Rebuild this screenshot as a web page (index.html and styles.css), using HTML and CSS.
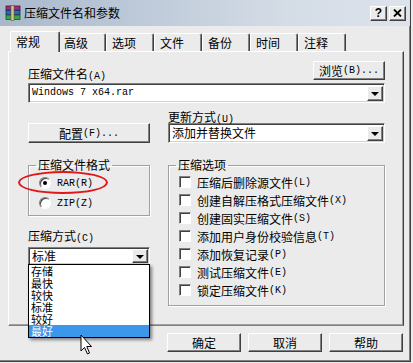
FILE: index.html
```html
<!DOCTYPE html>
<html lang="zh-CN">
<head>
  <meta charset="UTF-8" />
  <title>压缩文件名和参数</title>
  <link rel="stylesheet" href="styles.css">
</head>
<body>

  <div class="window">
    <!-- title bar -->
    <div class="titlebar">
      <svg class="app-icon" width="16" height="16" viewBox="0 0 16 16">
        <rect x="1" y="1" width="14" height="4" fill="#9b2f7a" stroke="#4a1238" stroke-width="0.8"/>
        <rect x="1" y="5.5" width="14" height="4" fill="#2f63c4" stroke="#142f66" stroke-width="0.8"/>
        <rect x="1" y="10" width="14" height="4.5" fill="#3aa24a" stroke="#185424" stroke-width="0.8"/>
        <rect x="6" y="0.5" width="3" height="15" fill="#d8c48a" stroke="#6b5a2a" stroke-width="0.6"/>
      </svg>
      <span class="title">压缩文件名和参数</span>
      <div class="caption-buttons">
        <div class="cap-btn help">?</div>
        <div class="cap-btn close">
          <svg width="9" height="8" viewBox="0 0 9 8">
            <path d="M1 0.5 L8 7.5 M8 0.5 L1 7.5" stroke="#000" stroke-width="1.8"/>
          </svg>
        </div>
      </div>
    </div>

    <!-- tabs -->
    <div class="tabs">
      <div class="tab active">常规</div>
      <div class="tab">高级</div>
      <div class="tab">选项</div>
      <div class="tab">文件</div>
      <div class="tab">备份</div>
      <div class="tab">时间</div>
      <div class="tab">注释</div>
    </div>

    <div class="panel">
      <div class="row-top">
        <div class="label">压缩文件名<span class="hk">(A)</span></div>
        <div class="btn browse">浏览<span class="hk">(B)...</span></div>
      </div>

      <div class="combo combo-archive">
        <span class="combo-text mono">Windows 7 x64.rar</span>
        <span class="combo-arrow"></span>
      </div>

      <div class="row-mid">
        <div class="col-left col-bottom">
          <div class="btn config">配置<span class="hk">(F)...</span></div>
        </div>
        <div class="col-right">
          <div class="label">更新方式<span class="hk">(U)</span></div>
          <div class="combo">
            <span class="combo-text">添加并替换文件</span>
            <span class="combo-arrow"></span>
          </div>
        </div>
      </div>

      <div class="row-groups">
        <div class="col-left">
          <fieldset class="group group-format">
            <legend>压缩文件格式</legend>
            <div class="radio-row"><span class="radio checked"></span><span class="mono">RAR(R)</span></div>
            <div class="radio-row"><span class="radio"></span><span class="mono">ZIP(Z)</span></div>
          </fieldset>
          <div class="label method-label">压缩方式<span class="hk">(C)</span></div>
          <div class="combo combo-method">
            <span class="combo-text">标准</span>
            <span class="combo-arrow"></span>
          </div>
        </div>

        <fieldset class="group group-options col-right">
          <legend>压缩选项</legend>
          <div class="check-row"><span class="check"></span>压缩后删除源文件<span class="hk">(L)</span></div>
          <div class="check-row"><span class="check"></span>创建自解压格式压缩文件<span class="hk">(X)</span></div>
          <div class="check-row"><span class="check"></span>创建固实压缩文件<span class="hk">(S)</span></div>
          <div class="check-row"><span class="check"></span>添加用户身份校验信息<span class="hk">(T)</span></div>
          <div class="check-row"><span class="check"></span>添加恢复记录<span class="hk">(P)</span></div>
          <div class="check-row"><span class="check"></span>测试压缩文件<span class="hk">(E)</span></div>
          <div class="check-row"><span class="check"></span>锁定压缩文件<span class="hk">(K)</span></div>
        </fieldset>
      </div>
    </div>

    <div class="footer">
      <div class="btn dlg-btn">确定</div>
      <div class="btn dlg-btn">取消</div>
      <div class="btn dlg-btn">帮助</div>
    </div>

    <!-- open dropdown of the method combo -->
    <ul class="dropdown-list">
      <li>存储</li>
      <li>最快</li>
      <li>较快</li>
      <li>标准</li>
      <li>较好</li>
      <li class="selected">最好</li>
    </ul>

    <div class="mark-ellipse"></div>

    <svg class="cursor" width="13" height="21" viewBox="0 0 13 21">
      <path d="M1 1 L1 17 L4.5 13.5 L7.5 20 L9.5 19 L6.8 12.5 L11.5 12.5 Z" fill="#fff" stroke="#000" stroke-width="1" stroke-linejoin="miter"/>
    </svg>
  </div>

</body>
</html>
```

FILE: styles.css
```css
/* === Global === */
html, body {
  margin: 0;
  padding: 0;
  background-color: #ebebeb;
}

body {
  font-family: "Noto Sans CJK SC", "Noto Sans", sans-serif;
  font-size: 12px;
  color: #000;
}

.hk,
.mono {
  font-family: "Liberation Mono", "Noto Sans CJK SC", monospace;
  font-size: 10px;
}

/* === Window === */
.window {
  position: relative;
  width: 411px;
  height: 362px;
  box-sizing: border-box;
  border-right: 1px solid #404040;
  border-bottom: 1px solid #404040;
  box-shadow: inset -1px -1px 0 #808080;
  overflow: hidden;
}

.titlebar {
  display: flex;
  align-items: center;
  height: 26px;
  padding: 0 4px 0 5px;
  background: linear-gradient(to right, #a8b8cc, #d4dce6 70%, #dde3eb);
}

.app-icon {
  margin-right: 3px;
}

.title {
  flex: 1;
  line-height: 14px;
}

.caption-buttons {
  display: flex;
  gap: 2px;
}

.cap-btn {
  display: flex;
  align-items: center;
  justify-content: center;
  width: 17px;
  height: 15px;
  box-sizing: border-box;
  background: #ebebeb;
  border: 1px solid;
  border-color: #fff #404040 #404040 #fff;
  box-shadow: inset -1px -1px 0 #808080;
}

.cap-btn.help {
  font-family: "Liberation Sans", sans-serif;
  font-weight: bold;
  font-size: 12px;
  line-height: 12px;
}

/* === Tabs === */
.tabs {
  position: relative;
  z-index: 1;
  display: flex;
  align-items: flex-end;
  height: 20px;
  margin-top: 5px;
  padding-left: 10px;
}

.tab {
  width: 48px;
  height: 18px;
  box-sizing: border-box;
  padding: 3px 0 0 5px;
  line-height: 12px;
  background: #ebebeb;
  border-top: 1px solid #fff;
  border-left: 1px solid #fff;
  border-right: 1px solid #404040;
  border-radius: 2px 2px 0 0;
  box-shadow: inset -1px 0 0 #808080;
}

.tab.active {
  position: relative;
  z-index: 2;
  width: 50px;
  height: 21px;
  margin-right: -2px;
  margin-bottom: -1px;
  padding-top: 4px;
}

/* === Panel === */
.panel {
  height: 275px;
  box-sizing: border-box;
  margin: 0 6px 0 8px;
  padding: 8px 18px 0 19px;
  border: 1px solid;
  border-color: #fff #404040 #808080 #fff;
  box-shadow: inset -1px -1px 0 #a0a0a0;
}

.label {
  height: 13px;
  line-height: 13px;
  white-space: nowrap;
}

.row-top {
  display: flex;
  justify-content: space-between;
  align-items: flex-end;
  height: 20px;
}

.row-mid {
  display: flex;
  gap: 18px;
  margin-top: 7px;
}

.row-groups {
  display: flex;
  align-items: flex-start;
  gap: 18px;
  margin-top: 16px;
}

.col-left {
  display: flex;
  flex-direction: column;
  width: 122px;
}

.col-bottom {
  justify-content: flex-end;
}

.col-right {
  width: 217px;
}

/* === Buttons === */
.btn {
  display: flex;
  align-items: center;
  justify-content: center;
  box-sizing: border-box;
  background: #ebebeb;
  border: 1px solid;
  border-color: #fff #404040 #404040 #fff;
  box-shadow: inset -1px -1px 0 #808080;
  line-height: 13px;
}

.browse {
  width: 72px;
  height: 19px;
}

.config {
  width: 122px;
  height: 20px;
}

/* === Combo boxes === */
.combo {
  display: flex;
  align-items: center;
  height: 20px;
  box-sizing: border-box;
  padding: 0 1px 0 3px;
  background: #fff;
  border: 1px solid;
  border-color: #808080 #fff #fff #808080;
  box-shadow: inset 1px 1px 0 #404040, inset -1px -1px 0 #d4d0c8;
}

.combo-archive {
  margin-top: 3px;
}

.combo-method {
  height: 18px;
  margin-top: 5px;
}

.combo-text {
  flex: 1;
  line-height: 14px;
}

.combo-arrow {
  position: relative;
  width: 16px;
  height: 15px;
  box-sizing: border-box;
  background: #ebebeb;
  border: 1px solid;
  border-color: #fff #404040 #404040 #fff;
  box-shadow: inset -1px -1px 0 #808080;
}

.combo-method .combo-arrow {
  height: 14px;
}

.combo-arrow::after {
  content: "";
  position: absolute;
  left: 3px;
  top: 5px;
  border-left: 4px solid transparent;
  border-right: 4px solid transparent;
  border-top: 4px solid #000;
}

/* === Group boxes === */
.group {
  margin: 0;
  padding: 2px 0 0 0;
  border: 1px solid #a0a0a0;
  box-shadow: inset 1px 1px 0 #fff, 1px 1px 0 #fff;
}

.group legend {
  margin-left: 7px;
  padding: 0 2px;
  height: 12px;
  line-height: 12px;
}

.group-format {
  height: 57px;
  box-sizing: border-box;
}

.group-options {
  height: 147px;
  box-sizing: border-box;
}

.radio-row {
  display: flex;
  align-items: center;
  gap: 6px;
  height: 20px;
  padding-left: 10px;
}

.radio {
  position: relative;
  width: 10px;
  height: 10px;
  border-radius: 50%;
  background: #fff;
  border: 1px solid;
  border-color: #808080 #fff #fff #808080;
  box-shadow: inset 1px 1px 0 #404040;
}

.radio.checked::after {
  content: "";
  position: absolute;
  left: 3px;
  top: 3px;
  width: 4px;
  height: 4px;
  border-radius: 50%;
  background: #000;
}

.method-label {
  margin-top: 13px;
}

.check-row {
  display: flex;
  align-items: center;
  height: 18px;
  padding-left: 10px;
  line-height: 13px;
  white-space: nowrap;
}

.check {
  width: 10px;
  height: 10px;
  margin-right: 6px;
  background: #fff;
  border: 1px solid;
  border-color: #808080 #fff #fff #808080;
  box-shadow: inset 1px 1px 0 #404040;
}

/* === Footer === */
.footer {
  display: flex;
  justify-content: flex-end;
  gap: 7px;
  margin: 7px 7px 0 8px;
}

.dlg-btn {
  width: 74px;
  height: 19px;
}

/* === Dropdown list (open) === */
.dropdown-list {
  position: absolute;
  left: 28px;
  top: 264px;
  width: 122px;
  margin: 0;
  padding: 0;
  list-style: none;
  box-sizing: border-box;
  background: #fff;
  border: 1px solid #000;
  box-shadow: 2px 2px 3px rgba(0, 0, 0, 0.45);
}

.dropdown-list li {
  height: 12px;
  padding-left: 2px;
  font-size: 11px;
  line-height: 12px;
}

.dropdown-list li.selected {
  background: #3b97ea;
  color: #fff;
}

/* === Overlays === */
.mark-ellipse {
  position: absolute;
  left: 18px;
  top: 171px;
  width: 86px;
  height: 19px;
  border: 2px solid #e0161a;
  border-radius: 50%;
}

.cursor {
  position: absolute;
  left: 80px;
  top: 334px;
}
```
